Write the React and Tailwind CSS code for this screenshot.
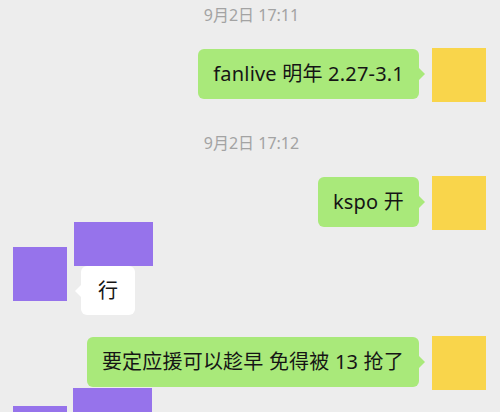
import React from "react";

const font = { fontFamily: '"Noto Sans", "Noto Sans CJK SC", sans-serif' };

function Time({ children, className = "" }) {
  return (
    <div className={"flex justify-center pl-[3px] text-[16px] leading-[16px] text-[#a3a3a3] " + className}>
      {children}
    </div>
  );
}

function Right({ text, className = "" }) {
  return (
    <div className={"flex justify-end items-start pr-[14px] " + className}>
      <div className="relative mt-px h-[50px] rounded-[6px] bg-[#a9e97a] px-[15px] flex items-center text-[20px] tracking-[0.2px] text-[#151515]">
        {text}
        <span className="absolute right-[-6px] top-[19px] h-0 w-0 border-y-[6px] border-l-[6px] border-y-transparent border-l-[#a9e97a]" />
      </div>
      <div className="ml-[13px] h-[54px] w-[54px] shrink-0 bg-[#f9d54b]" />
    </div>
  );
}

export default function App() {
  return (
    <div className="h-[412px] w-[500px] overflow-hidden bg-[#ededed]" style={font}>
      <Time className="pt-[7px]">9月2日 17:11</Time>
      <Right className="mt-[25px]" text="fanlive 明年 2.27-3.1" />
      <Time className="mt-[33px]">9月2日 17:12</Time>
      <Right className="mt-[25px]" text="kspo 开" />
      <div className="-mt-[8px] flex items-start pl-[13px]">
        <div className="mt-[25px] h-[54px] w-[54px] shrink-0 bg-[#9673eb]" />
        <div className="ml-[7px] flex flex-col items-start">
          <div className="h-[44px] w-[79px] bg-[#9673eb]" />
          <div className="relative ml-[7px] h-[49px] rounded-[6px] bg-white px-[17px] flex items-center text-[20px] text-[#151515]">
            行
            <span className="absolute left-[-6px] top-[19px] h-0 w-0 border-y-[6px] border-r-[6px] border-y-transparent border-r-white" />
          </div>
        </div>
      </div>
      <Right className="mt-[21px]" text="要定应援可以趁早 免得被 13 抢了" />
      <div className="-mt-[2px] flex items-start pl-[13px]">
        <div className="mt-[18px] h-[54px] w-[54px] shrink-0 bg-[#9673eb]" />
        <div className="ml-[6px] h-[45px] w-[79px] bg-[#9673eb]" />
      </div>
    </div>
  );
}
